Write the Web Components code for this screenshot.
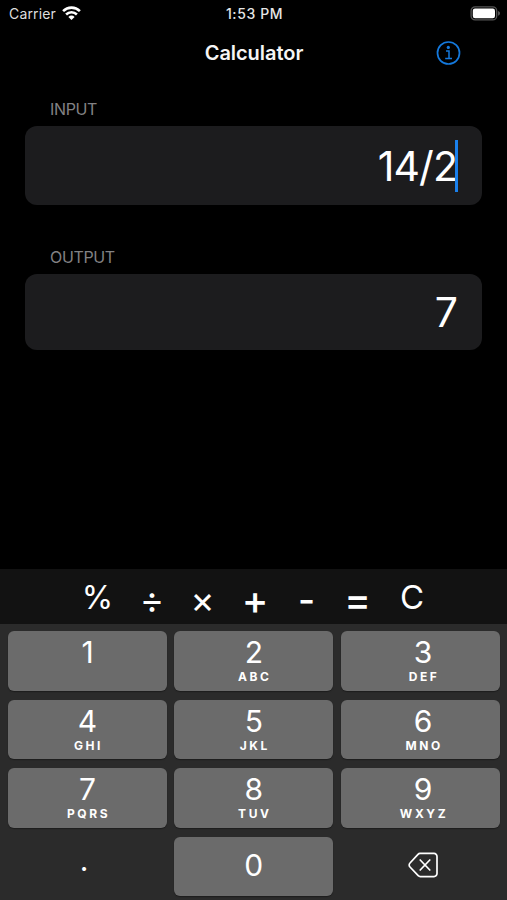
<!DOCTYPE html>
<html lang="en">
<head>
<meta charset="utf-8">
<title>Calculator</title>
<style>
html, body { margin: 0; background: #000; height: 900px; overflow: hidden; }
body { font-family: Inter, "Liberation Sans", sans-serif; color: #fff; -webkit-font-smoothing: antialiased; }
</style>
</head>
<body>
<calc-app></calc-app>
<script>
function define(name, html) {
  const t = document.createElement('template');
  t.innerHTML = html;
  customElements.define(name, class extends HTMLElement {
    constructor() {
      super();
      this.attachShadow({ mode: 'open' }).appendChild(t.content.cloneNode(true));
    }
  });
}

define('status-bar', `
<style>
:host { display: grid; grid-template-columns: 1fr auto 1fr; height: 28px; align-items: center; padding: 0 6px 0 9px; box-sizing: border-box; font-size: 14px; color: #dedede; line-height: 28px; }
.left { display: flex; align-items: center; gap: 6px; letter-spacing: .15px; }
.time { font-weight: 500; font-size: 14px; letter-spacing: .6px; color: #e6e6e6; margin-right: 1px; }
.battery { justify-self: end; }
svg { display: block; }
.left svg { position: relative; top: -1px; }
</style>
<div class="left"><span>Carrier</span>
<svg width="19" height="14" viewBox="0 0 19 14" fill="none" stroke="#fff" stroke-width="2.6">
<path d="M1.1 5.1a12 12 0 0 1 16.8 0M4.1 8.5a7.7 7.7 0 0 1 10.8 0"/><path d="M6.4 10.9a4.4 4.4 0 0 1 6.2 0L9.5 14z" fill="#fff" stroke="none"/></svg></div>
<div class="time">1:53 PM</div>
<svg class="battery" width="31" height="16" viewBox="0 0 31 16"><rect x="1.1" y=".9" width="25.6" height="13" rx="4" fill="none" stroke="#555" stroke-width="1.3"/><rect x="2.8" y="2.6" width="22.2" height="9.6" rx="2.2" fill="#fff"/><path d="M28.2 5.1c2.2.8 2.2 3.8 0 4.6z" fill="#666"/></svg>`);

define('nav-bar', `
<style>
:host { display: grid; grid-template-columns: 1fr auto 1fr; align-items: center; height: 49px; padding: 0 46px; box-sizing: border-box; }
h1 { margin: 0; font-size: 20px; font-weight: 600; line-height: 49px; padding: 1px 0 0 1px; letter-spacing: -.05px; color: #f5f5f5; }
svg { justify-self: end; display: block; }
</style>
<span></span><h1><slot></slot></h1>
<svg width="26" height="26" viewBox="0 0 26 26" fill="none" stroke="#1479dd" stroke-width="1.7"><circle cx="13.5" cy="13" r="11"/><path d="M11 11h3v7.2M10.2 18.4h6.8" stroke-width="1.5"/><circle cx="13.3" cy="7.4" r="1.6" fill="#1479dd" stroke="none"/></svg>`);

define('calc-field', `
<style>
:host { display: block; }
.label { font-size: 16px; line-height: 34px; padding-left: 25px; color: #828284; letter-spacing: -.35px; }
.box { height: var(--h, 79px); border-radius: 12px; background: #1c1c1e; display: flex; justify-content: flex-end; align-items: center; padding-right: var(--r, 24px); font-size: 41px; letter-spacing: -.9px; box-sizing: border-box; }
</style>
<div class="label"><slot name="label"></slot></div>
<div class="box"><slot></slot></div>`);

define('text-caret', `<style>:host { display: block; width: 3px; height: 52px; margin-left: -2px; background: #1a80ec; }</style>`);

define('op-bar', `
<style>
:host { display: grid; grid-template-columns: 55px 54px 47px 58px 45px 57px 52px; padding-left: 70px; height: 55px; background: #121212; align-items: center; justify-items: center; }
</style><slot></slot>`);

define('op-key', `
<style>:host { display: block; font-size: var(--s, 33px); font-weight: var(--w, 400); line-height: 55px; padding-top: var(--t, 1px); color: #fff; height: 55px; box-sizing: border-box; }</style><slot></slot>`);

define('key-pad', `
<style>
:host { display: grid; grid-template-columns: repeat(3, 159px); grid-template-rows: repeat(4, 60px); gap: 8.5px 7.3px; padding: 7px 8px 0; background: #2b2b2b; height: 276px; box-sizing: border-box; }
</style><slot></slot>`);

define('pad-key', `
<style>
:host { display: flex; flex-direction: column; align-items: center; background: #6b6b6b; border-radius: 6px; box-shadow: 0 1px 1px #1d1d1d; box-sizing: border-box; padding-top: 4px; height: 59.6px; }
:host(:nth-child(3n)) { padding-left: 6px; }
:host([plain]) { background: none; box-shadow: none; }
:host([center]) { padding-top: 11px; }
.n { font-size: 30px; line-height: 34px; }
.l { font-size: 12px; font-weight: 700; line-height: 16px; letter-spacing: 2.6px; padding-left: 2px; }
::slotted(svg) { display: block; }
</style><div class="n"><slot></slot></div><div class="l"><slot name="letters"></slot></div>`);

define('calc-app', `
<style>
:host { display: flex; flex-direction: column; height: 900px; width: 507px; background: #000; }
main { flex: 1; padding: 15px 25px 0; display: flex; flex-direction: column; gap: 35px; }
.dot { display: block; margin: -5px 7px 0 0; }
</style>
<status-bar></status-bar>
<nav-bar>Calculator</nav-bar>
<main>
<calc-field><span slot="label">INPUT</span><span>14/2</span><text-caret></text-caret></calc-field>
<calc-field style="--h:76px;--r:25px"><span slot="label">OUTPUT</span><span>7</span></calc-field>
</main>
<op-bar><op-key style="--s:32px">%</op-key><op-key style="--s:37px;--t:3px">÷</op-key><op-key style="--s:37px;--t:3px">×</op-key><op-key style="--s:40px;--t:3px;--w:500">+</op-key><op-key style="--s:37px;--t:3px;--w:500">-</op-key><op-key style="--s:40px;--t:3px;--w:500">=</op-key><op-key>C</op-key></op-bar>
<key-pad>
<pad-key>1</pad-key>
<pad-key>2<span slot="letters">ABC</span></pad-key>
<pad-key>3<span slot="letters">DEF</span></pad-key>
<pad-key>4<span slot="letters">GHI</span></pad-key>
<pad-key>5<span slot="letters">JKL</span></pad-key>
<pad-key>6<span slot="letters">MNO</span></pad-key>
<pad-key>7<span slot="letters">PQRS</span></pad-key>
<pad-key>8<span slot="letters">TUV</span></pad-key>
<pad-key>9<span slot="letters">WXYZ</span></pad-key>
<pad-key plain center><span class="dot">.</span></pad-key>
<pad-key center>0</pad-key>
<pad-key plain center><svg width="32" height="34" viewBox="-1 0 32 34" fill="none" stroke="#fff" stroke-width="1.7" stroke-linejoin="round" stroke-linecap="round"><path d="M12 5.4h14a3 3 0 0 1 3 3v17.2a3 3 0 0 1-3 3H12.4a3 3 0 0 1-2.2-.9L2 19a2.8 2.8 0 0 1 0-4L10 6.3a3 3 0 0 1 2-.9zM12.2 12l9.6 10M21.8 12l-9.6 10"/></svg></pad-key>
</key-pad>`);
</script>
</body>
</html>
